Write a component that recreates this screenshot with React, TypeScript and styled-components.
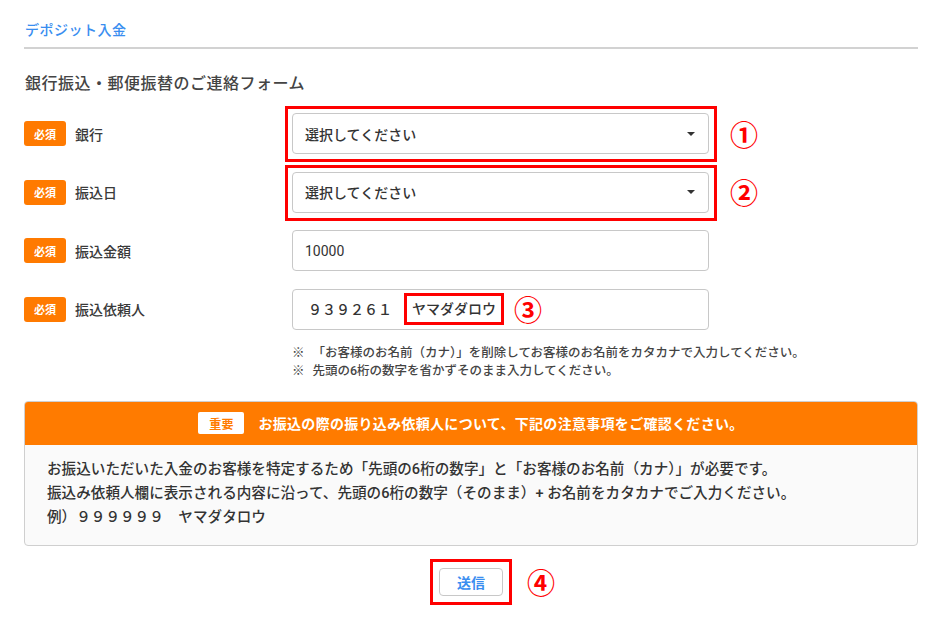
import React from 'react';
import styled, { createGlobalStyle } from 'styled-components';

const GlobalStyle = createGlobalStyle`
  body {
    margin: 0;
    background: #fff;
    font-family: Roboto, "Noto Sans CJK JP", sans-serif;
    color: #333;
  }
`;

const Page = styled.div`
  width: 940px;
  box-sizing: border-box;
  padding: 20px 22px 30px 24px;
`;

const Header = styled.div`
  padding: 0 0 7px 1px;
  border-bottom: 2px solid #d2d2d2;
`;

const PageTitle = styled.h1`
  margin: 0;
  font-size: 14px;
  line-height: 20px;
  font-weight: 500;
  letter-spacing: 0.5px;
  color: #3a8ef0;
`;

const FormTitle = styled.h2`
  margin: 24px 0 18px 1px;
  font-size: 16px;
  line-height: 22px;
  font-weight: 500;
  letter-spacing: 0.5px;
  color: #444;
`;

const Rows = styled.div`
  display: flex;
  flex-direction: column;
  gap: 17.5px;
`;

const Row = styled.div`
  display: grid;
  grid-template-columns: 268px 417px auto;
  align-items: center;
`;

const LabelCell = styled.div`
  display: flex;
  align-items: center;
  gap: 9px;
`;

const Required = styled.span`
  display: inline-flex;
  align-items: center;
  justify-content: center;
  width: 42px;
  height: 25px;
  border-radius: 3px;
  background: #ff7a00;
  color: #fff;
  font-size: 11px;
  font-weight: 700;
`;

const Label = styled.span`
  font-size: 14px;
  font-weight: 500;
  color: #3a3a3a;
`;

const Field = styled.div<{ $marked?: boolean }>`
  position: relative;
  display: flex;
  align-items: center;
  justify-content: space-between;
  height: 41px;
  box-sizing: border-box;
  padding: 0 13px 0 12px;
  border: 1px solid #c8c8c8;
  border-radius: 4px;
  background: #fff;
  font-size: 14px;
  font-weight: 500;
  color: #333;
  ${p =>
    p.$marked &&
    `&::after {
      content: '';
      position: absolute;
      inset: -8px -9px -9px -8px;
      border: 3px solid #f00;
      pointer-events: none;
    }`}
`;

const FieldText = styled.span<{ $numeric?: boolean }>`
  display: flex;
  align-items: center;
  font-weight: ${p => (p.$numeric ? 400 : 500)};
`;

const Caret = styled.span`
  width: 0;
  height: 0;
  border-left: 4px solid transparent;
  border-right: 4px solid transparent;
  border-top: 4px solid #333;
`;

const Digits = styled.span`
  font-family: "Noto Sans CJK JP", sans-serif;
  padding-left: 3px;
`;

const NameBox = styled.span`
  margin-left: 12px;
  padding: 3px 5px;
  border: 3px solid #f00;
  line-height: 20px;
`;

const Mark = styled.span<{ $gap?: number }>`
  margin-left: ${p => p.$gap ?? 21}px;
  font-family: "Noto Sans CJK JP", sans-serif;
  font-size: 28px;
  font-weight: 700;
  line-height: 30px;
  color: #f00;
`;

const Notes = styled.div`
  margin: 14px 0 0 268px;
  font-size: 12.5px;
  line-height: 18px;
  font-weight: 500;
  color: #444;
`;

const NoteLine = styled.div`
  display: flex;
  gap: 8px;
`;

const Notice = styled.div`
  margin-top: 21px;
  border: 1px solid #cfcfcf;
  border-radius: 4px;
  overflow: hidden;
  background: #fafafa;
`;

const NoticeHead = styled.div`
  display: flex;
  align-items: center;
  justify-content: center;
  gap: 14px;
  height: 43px;
  background: #ff7b00;
  color: #fff;
  font-size: 14px;
  font-weight: 700;
  letter-spacing: 0.3px;
`;

const ImportantTag = styled.span`
  display: inline-flex;
  align-items: center;
  justify-content: center;
  width: 46px;
  height: 22px;
  border-radius: 2px;
  background: #fff;
  color: #ff7b00;
  font-size: 12px;
`;

const NoticeBody = styled.div`
  padding: 12px 22px 16px;
  font-size: 14.6px;
  line-height: 24px;
  font-weight: 500;
  color: #333;
`;

const Actions = styled.div`
  display: grid;
  grid-template-columns: 1fr auto 1fr;
  align-items: center;
  margin-top: 22px;
`;

const SubmitButton = styled.button`
  position: relative;
  grid-column: 2;
  width: 64px;
  height: 28px;
  border: 1px solid #c8c8c8;
  border-radius: 4px;
  background: #fff;
  color: #3a8ef0;
  font-family: "Noto Sans CJK JP", sans-serif;
  font-size: 14px;
  font-weight: 700;

  &::after {
    content: '';
    position: absolute;
    inset: -10px -10px -10px -10px;
    border: 3px solid #f00;
    pointer-events: none;
  }
`;

const ActionMark = styled(Mark)`
  justify-self: start;
  line-height: 28px;
`;

export default function App(): JSX.Element {
  return (
    <Page>
      <GlobalStyle />
      <Header>
        <PageTitle>デポジット入金</PageTitle>
      </Header>
      <FormTitle>銀行振込・郵便振替のご連絡フォーム</FormTitle>
      <Rows>
        <Row>
          <LabelCell>
            <Required>必須</Required>
            <Label>銀行</Label>
          </LabelCell>
          <Field $marked>
            <FieldText>選択してください</FieldText>
            <Caret />
          </Field>
          <Mark>①</Mark>
        </Row>
        <Row>
          <LabelCell>
            <Required>必須</Required>
            <Label>振込日</Label>
          </LabelCell>
          <Field $marked>
            <FieldText>選択してください</FieldText>
            <Caret />
          </Field>
          <Mark>②</Mark>
        </Row>
        <Row>
          <LabelCell>
            <Required>必須</Required>
            <Label>振込金額</Label>
          </LabelCell>
          <Field>
            <FieldText $numeric>10000</FieldText>
          </Field>
        </Row>
        <Row>
          <LabelCell>
            <Required>必須</Required>
            <Label>振込依頼人</Label>
          </LabelCell>
          <Field>
            <FieldText>
              <Digits>９３９２６１</Digits>
              <NameBox>ヤマダダロウ</NameBox>
              <Mark $gap={10}>③</Mark>
            </FieldText>
          </Field>
        </Row>
      </Rows>
      <Notes>
        <NoteLine>
          <span>※</span>
          <span>「お客様のお名前（カナ）」を削除してお客様のお名前をカタカナで入力してください。</span>
        </NoteLine>
        <NoteLine>
          <span>※</span>
          <span>先頭の6桁の数字を省かずそのまま入力してください。</span>
        </NoteLine>
      </Notes>
      <Notice>
        <NoticeHead>
          <ImportantTag>重要</ImportantTag>
          お振込の際の振り込み依頼人について、下記の注意事項をご確認ください。
        </NoticeHead>
        <NoticeBody>
          お振込いただいた入金のお客様を特定するため「先頭の6桁の数字」と「お客様のお名前（カナ）」が必要です。
          <br />
          振込み依頼人欄に表示される内容に沿って、先頭の6桁の数字（そのまま）+ お名前をカタカナでご入力ください。
          <br />
          例）９９９９９９　ヤマダタロウ
        </NoticeBody>
      </Notice>
      <Actions>
        <SubmitButton>送信</SubmitButton>
        <ActionMark $gap={24}>④</ActionMark>
      </Actions>
    </Page>
  );
}
